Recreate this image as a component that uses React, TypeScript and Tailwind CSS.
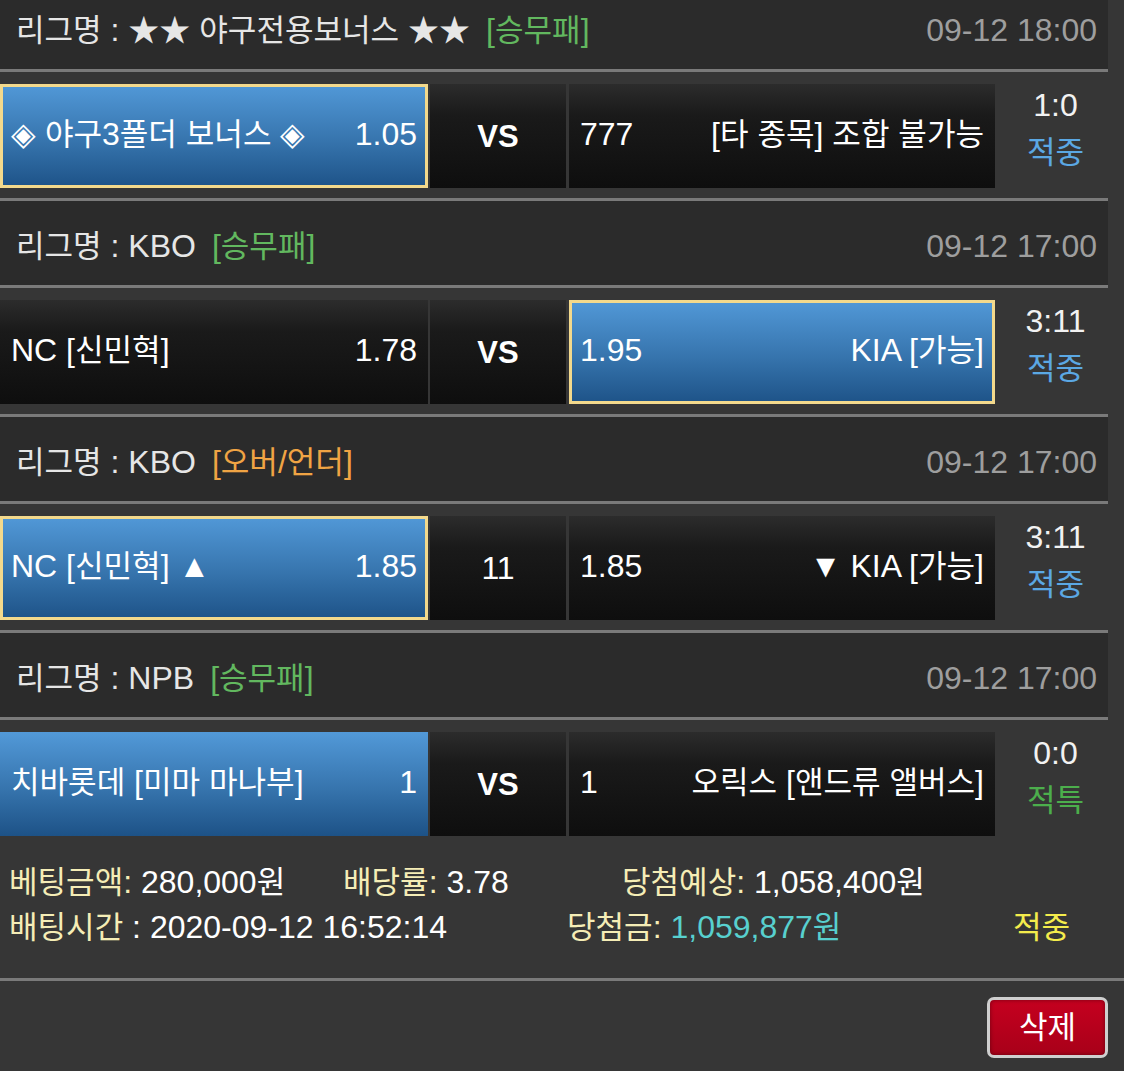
const HANGUL = /([\uAC00-\uD7A3★]+)/;

// hangul runs get their own size so the widths match the reference font
function K({ t }: { t: string }) {
  return (
    <>
      {t.split(HANGUL).map((part, i) =>
        HANGUL.test(part) ? (
          <span key={i} className="text-[0.97em]">
            {part}
          </span>
        ) : (
          part
        )
      )}
    </>
  );
}

type Game = {
  league: string;
  type: string;
  typeColor: string;
  time: string;
  home: string;
  homeOdds: string;
  mid: string;
  midBold: boolean;
  awayOdds: string;
  away: string;
  pick: "home" | "away";
  picked: boolean;
  score: string;
  result: string;
  resultColor: string;
};

const games: Game[] = [
  {
    league: "★★ 야구전용보너스 ★★",
    type: "[승무패]",
    typeColor: "text-[#62b85f]",
    time: "09-12 18:00",
    home: "◈ 야구3폴더 보너스 ◈",
    homeOdds: "1.05",
    mid: "VS",
    midBold: true,
    awayOdds: "777",
    away: "[타 종목] 조합 불가능",
    pick: "home",
    picked: true,
    score: "1:0",
    result: "적중",
    resultColor: "text-[#5ba8e4]",
  },
  {
    league: "KBO",
    type: "[승무패]",
    typeColor: "text-[#62b85f]",
    time: "09-12 17:00",
    home: "NC [신민혁]",
    homeOdds: "1.78",
    mid: "VS",
    midBold: true,
    awayOdds: "1.95",
    away: "KIA [가능]",
    pick: "away",
    picked: true,
    score: "3:11",
    result: "적중",
    resultColor: "text-[#5ba8e4]",
  },
  {
    league: "KBO",
    type: "[오버/언더]",
    typeColor: "text-[#f0a444]",
    time: "09-12 17:00",
    home: "NC [신민혁] ▲",
    homeOdds: "1.85",
    mid: "11",
    midBold: false,
    awayOdds: "1.85",
    away: "▼ KIA [가능]",
    pick: "home",
    picked: true,
    score: "3:11",
    result: "적중",
    resultColor: "text-[#5ba8e4]",
  },
  {
    league: "NPB",
    type: "[승무패]",
    typeColor: "text-[#62b85f]",
    time: "09-12 17:00",
    home: "치바롯데 [미마 마나부]",
    homeOdds: "1",
    mid: "VS",
    midBold: true,
    awayOdds: "1",
    away: "오릭스 [앤드류 앨버스]",
    pick: "home",
    picked: false,
    score: "0:0",
    result: "적특",
    resultColor: "text-[#4cae4c]",
  },
];

const dark =
  "bg-origin-border bg-[linear-gradient(to_bottom,#2c2c2c_0%,#1a1a1a_30%,#0e0e0e_100%)] border-transparent";
const blue =
  "bg-origin-border bg-[linear-gradient(to_bottom,#5299d8_0%,#3674ad_55%,#1d5287_100%)]";

const Cell = ({ sel, yellow, children }: { sel: boolean; yellow: boolean; children: React.ReactNode }) => (
  <div
    className={`h-[104px] border-[3px] px-[8px] pb-[4px] flex items-center justify-between ${
      sel ? `${blue} ${yellow ? "border-[#f3d98c]" : "border-transparent"}` : dark
    }`}
  >
    {children}
  </div>
);

const GameBlock = ({ g }: { g: Game }) => (
  <div>
    <div className="w-[1108px] h-[90px] bg-[#2b2b2b] border-y-[3px] border-[#7a7a7a] flex items-center justify-between pt-[6px] pl-[16px] pr-[11px]">
      <div className="text-[#e6e6e6]">
        <K t={`리그명 : ${g.league}`} />
        <span className={`ml-[16px] ${g.typeColor}`}>
          <K t={g.type} />
        </span>
      </div>
      <div className="text-[#9e9e9e]">{g.time}</div>
    </div>

    <div className="flex h-[126px] pt-[12px] pb-[10px]">
      <div className="w-[428px]">
        <Cell sel={g.pick === "home"} yellow={g.picked}>
          <span>
            <K t={g.home} />
          </span>
          <span>{g.homeOdds}</span>
        </Cell>
      </div>
      <div
        className={`ml-[2px] w-[136px] h-[104px] flex items-center justify-center ${dark} ${
          g.midBold ? "font-bold text-[31px]" : ""
        }`}
      >
        {g.mid}
      </div>
      <div className="ml-[3px] w-[426px]">
        <Cell sel={g.pick === "away"} yellow={g.picked}>
          <span>{g.awayOdds}</span>
          <span>
            <K t={g.away} />
          </span>
        </Cell>
      </div>
      <div className="w-[113px] pl-[8px] flex flex-col items-center">
        <div className="leading-[42px] text-[#f2f2f2]">{g.score}</div>
        <div className={`leading-[52px] ${g.resultColor}`}>
          <K t={g.result} />
        </div>
      </div>
    </div>
  </div>
);

export default function App() {
  return (
    <div className="w-[1124px] h-[1071px] overflow-hidden bg-[#363636] text-white text-[32px] leading-none font-['Liberation_Sans','Noto_Sans_CJK_KR',sans-serif]">
      <div className="-mt-[18px]">
        {games.map((g, i) => (
          <GameBlock key={i} g={g} />
        ))}

        <div className="h-[135px] pt-[14px] pl-[9px] border-b-[3px] border-[#7a7a7a]">
          <div className="flex h-[45px] items-center">
            <div className="w-[334px]">
              <span className="text-[#f5edb6]">
                <K t="베팅금액:" />
              </span>{" "}
              <K t="280,000원" />
            </div>
            <div className="w-[279px]">
              <span className="text-[#f5edb6]">
                <K t="배당률:" />
              </span>{" "}
              3.78
            </div>
            <div>
              <span className="text-[#f5edb6]">
                <K t="당첨예상:" />
              </span>{" "}
              <K t="1,058,400원" />
            </div>
          </div>
          <div className="flex h-[45px] items-center">
            <div className="w-[558px]">
              <span className="text-[#f5edb6]">
                <K t="배팅시간" />
              </span>{" "}
              : 2020-09-12 16:52:14
            </div>
            <div className="w-[446px]">
              <span className="text-[#f5edb6]">
                <K t="당첨금:" />
              </span>{" "}
              <span className="text-[#58d0cf]">
                <K t="1,059,877원" />
              </span>
            </div>
            <div className="text-[#f4ec4c]">
              <K t="적중" />
            </div>
          </div>
        </div>

        <div className="flex justify-end pt-[16px] pr-[16px]">
          <button className="w-[121px] h-[61px] rounded-[7px] border-[3px] border-[#cfcfcf] bg-[linear-gradient(to_bottom,#c5001f,#a80019)] text-white flex items-center justify-center shadow-[inset_0_0_4px_rgba(0,0,0,0.4)]">
            <K t="삭제" />
          </button>
        </div>
      </div>
    </div>
  );
}
